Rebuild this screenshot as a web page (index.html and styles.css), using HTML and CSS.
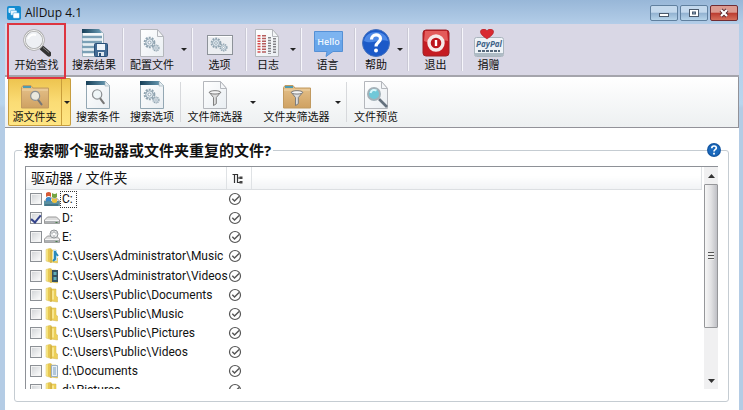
FILE: index.html
```html
<!DOCTYPE html>
<html lang="zh-CN">
<head>
<meta charset="utf-8">
<title>AllDup 4.1</title>
<link rel="stylesheet" href="styles.css">
</head>
<body>
<svg class="defs" aria-hidden="true">
  <defs>
    <linearGradient id="gold" x1="0" x2="1" y1="0" y2="0"><stop offset="0" stop-color="#fbf0a4"/><stop offset=".45" stop-color="#f3dc66"/><stop offset=".55" stop-color="#dcb43a"/><stop offset="1" stop-color="#f8e993"/></linearGradient>
    <linearGradient id="paper" x1="0" x2="1" y1="0" y2="1"><stop offset="0" stop-color="#fff"/><stop offset="1" stop-color="#e9eef2"/></linearGradient>
    <linearGradient id="teal" x1="0" x2="1" y1="0" y2="0"><stop offset="0" stop-color="#173f58"/><stop offset="1" stop-color="#6d9fb8"/></linearGradient>
    <linearGradient id="tan" x1="0" x2="0" y1="0" y2="1"><stop offset="0" stop-color="#e5c28b"/><stop offset="1" stop-color="#cfa162"/></linearGradient>
    <symbol id="gear" viewBox="0 0 16 16"><circle cx="8" cy="8" r="6" fill="none" stroke="#8fa3b0" stroke-width="2.4" stroke-dasharray="2.4 1.4"/><circle cx="8" cy="8" r="4.6" fill="#dfe8ee" stroke="#8499a8"/><circle cx="8" cy="8" r="1.8" fill="#fff" stroke="#8499a8"/></symbol>
    <symbol id="page" viewBox="0 0 24 28"><path d="M.5.5h17l6 7v20H.5z" fill="url(#paper)" stroke="#b4b7bc"/><path d="M17.5.5v7h6z" fill="#f4f6f8" stroke="#b4b7bc"/></symbol>
    <symbol id="form" viewBox="0 0 24 28"><path d="M.5.5h19l4 5v22H.5z" fill="url(#paper)" stroke="#93a7b3"/><path d="M0 0h19l3 4H0z" fill="url(#teal)"/><path d="M19 0v5h5z" fill="#e6eef2" stroke="#93a7b3" stroke-width=".6"/></symbol>
    <symbol id="funnel" viewBox="0 0 14 18"><path d="M1 2.5 5.4 8v8.5l3-2V8L13 2.5z" fill="#ddd" stroke="#777"/><ellipse cx="7" cy="2.5" rx="6" ry="1.8" fill="#f5f5f5" stroke="#777"/></symbol>
    <symbol id="folder" viewBox="0 0 28 24"><path d="M.5 2.5 2 .5h8l2 2.500h15.500v20H.5z" fill="url(#tan)" stroke="#c19a60"/><path d="M2 2h8" stroke="#4f9bb0" stroke-width="2"/><path d="M1 5h26" stroke="#f0d5a8"/></symbol>
    <symbol id="glass" viewBox="0 0 16 20"><path d="m10 11 4.500 6" stroke="#777" stroke-width="2.400" stroke-linecap="round"/><circle cx="7" cy="7" r="5.300" fill="#eef5f8" fill-opacity=".8" stroke="#8b8f92" stroke-width="1.400"/></symbol>
    <symbol id="ok" viewBox="0 0 14 14"><circle cx="7" cy="7" r="5.500" fill="#fff" stroke="#555" stroke-width="1.200"/><path d="m4.300 6.800 2.200 2.300 4.600-4.600" fill="none" stroke="#555" stroke-width="1.400"/></symbol>
    <symbol id="dir" viewBox="0 0 16 16"><path d="M2 1.500 7 0v14.500L2 13z" fill="url(#gold)" stroke="#dcc45c" stroke-width=".5"/><path d="M7 2h5v7l1.500 1v5L7 14z" fill="#edcf58" stroke="#d4b546" stroke-width=".5"/><path d="M7 1v14" stroke="#c79f2f"/><path d="M9 3.500v9" stroke="#fbeea0" stroke-width="1.500"/></symbol>
    <symbol id="disk" viewBox="0 0 16 16"><path d="m3.500 7h9l3 3v3.500h-15V10z" fill="#ddd" stroke="#999"/><path d="M1 10.500h14v3H1z" fill="#aeb1b3"/><path d="M1 10.500h14" stroke="#f6f6f6"/><path d="M11.500 12.500h2" stroke="#477d4a"/></symbol>
  </defs>
</svg>
<div class="window">
  <header class="titlebar">
    <svg class="logo" viewBox="0 0 14 14"><rect width="14" height="14" rx="2" fill="#148cd0"/><rect x="1.500" y="2" width="6.500" height="5" rx="1" fill="#d6efff"/><rect x="3.500" y="4.300" width="6.500" height="5" rx="1" fill="#e3f5ff" stroke="#148cd0" stroke-width=".5"/><rect x="6" y="6.800" width="6.500" height="5.500" rx="1" fill="#fff" stroke="#148cd0" stroke-width=".5"/></svg>
    <h1>AllDup 4.1</h1>
    <div class="controls">
      <button aria-label="最小化"><svg viewBox="0 0 12 10"><rect x="1.500" y="5.500" width="9" height="3" fill="#fff" stroke="#4b5a6c"/></svg></button>
      <button aria-label="最大化"><svg viewBox="0 0 12 10"><rect x="1.500" y="1.500" width="9" height="7" fill="#fff" stroke="#4b5a6c"/><rect x="4.500" y="4" width="3" height="2" fill="#8fabc8" stroke="#4b5a6c"/></svg></button>
      <button class="close" aria-label="关闭"><svg viewBox="0 0 12 10"><path d="m3 2 6 6m0-6L3 8" stroke="#5a2a30" stroke-width="4"/><path d="m3 2 6 6m0-6L3 8" stroke="#fff" stroke-width="2.200"/></svg></button>
    </div>
  </header>
  <nav class="toolbar main" aria-label="主工具栏">
    <button class="tool marked"><svg viewBox="0 0 28 28"><path d="m19 19 7 6" stroke="#333" stroke-width="5" stroke-linecap="round"/><path d="m20 18.500 6 5" stroke="#888"/><circle cx="11" cy="11" r="9.500" fill="#eef0f4" stroke="#aaa" stroke-width="2.500"/><circle cx="11" cy="11" r="9.500" fill="none" stroke="#f4f4f4"/><path d="M5 10c1-4 5-5 8-4" fill="none" stroke="#fff" stroke-width="2"/></svg><span>开始查找</span></button>
    <button class="tool results"><svg viewBox="0 0 28 28"><path d="M2.500.5h17l4 4v23h-21z" fill="#f5f8fa" stroke="#a1b3be"/><path d="M2 0h17l3 4H2z" fill="url(#teal)"/><path d="M2 8h20M2 13h20M2 18h20M2 23h20" stroke="#7ba0b6" stroke-width="2.400"/><path d="M2 10h20M2 15h20M2 20h20" stroke="#d7e4eb"/><rect x="14.500" y="14.500" width="13" height="13" rx="1" fill="#436b94" stroke="#294f78"/><rect x="17" y="15" width="8" height="6" fill="#eef4fa"/><rect x="18" y="23" width="6" height="4" fill="#dfe8ef"/><rect x="19" y="24" width="2" height="3" fill="#294f78"/></svg><span>搜索结果</span></button>
    <i class="sep"></i>
    <button class="tool config"><svg viewBox="0 0 28 28"><use href="#page" x="2" width="24" height="28"/><use href="#gear" x="5" y="7" width="13" height="13"/><use href="#gear" x="14" y="15" width="8" height="8"/></svg><span>配置文件</span></button><button class="more" aria-label="配置文件菜单"></button>
    <i class="sep"></i>
    <button class="tool std"><svg viewBox="0 0 28 28"><rect x="1.500" y="6.500" width="25" height="19" fill="#eceef1" stroke="#8d9299"/><path d="M2 7.500h24" stroke="#fff"/><use href="#gear" x="4" y="8" width="12" height="12"/><use href="#gear" x="13" y="14" width="9" height="9"/></svg><span>选项</span></button>
    <i class="sep"></i>
    <button class="tool log"><svg viewBox="0 0 28 28"><use href="#page" x="1" width="24" height="28"/><path d="M5 6v19" stroke="#d84b4b" stroke-width="3" stroke-dasharray="1.500 1.200"/><path d="M10 6v19" stroke="#b55d5d" stroke-width="4" stroke-dasharray="1.500 1.200"/><path d="M15.500 8v17M20.500 9v16" stroke="#838388" stroke-width="3" stroke-dasharray="1.500 1.200"/></svg><span>日志</span></button><button class="more" aria-label="日志菜单"></button>
    <i class="sep"></i>
    <button class="tool lang"><svg viewBox="0 0 30 28"><path d="M1.500 2.500h28v20H20l-7 5 1-5H1.500z" fill="#68a5ea" stroke="#5590d5"/><path d="M2 3h27v8H2z" fill="#7db4f0"/><text x="15.500" y="16" text-anchor="middle" class="hello">Hello</text></svg><span>语言</span></button>
    <i class="sep"></i>
    <button class="tool help"><svg viewBox="0 0 28 28"><circle cx="14" cy="14" r="13.500" fill="#1c5ac8" stroke="#4672bd"/><path d="M2 12C4 0 24 0 26 12 18 9 10 16 2 12" fill="#4c88e6"/><path d="M9.500 10.500c0-6 9-6 9-1 0 4-4.500 3.500-4.500 8" fill="none" stroke="#fff" stroke-width="3.200"/><circle cx="14" cy="21.500" r="2" fill="#fff"/></svg><span>帮助</span></button><button class="more" aria-label="帮助菜单"></button>
    <i class="sep"></i>
    <button class="tool std"><svg viewBox="0 0 28 28"><rect x="1" y="1" width="26" height="26" rx="3" fill="#c51c23" stroke="#9e2329"/><path d="M3 2h22l1 10C18 9 10 16 2 12z" fill="#e35b5b"/><circle cx="14" cy="14" r="7" fill="#bd151c" stroke="#f6e9e9" stroke-width="3.400"/><path d="M14 11v6" stroke="#fff" stroke-width="2.400"/></svg><span>退出</span></button>
    <i class="sep"></i>
    <button class="tool donate"><svg viewBox="0 0 30 28"><rect x=".5" y="8.500" width="29" height="19" rx="2" fill="#eef3f7" stroke="#aab5be"/><path d="M1 24h28v3H1z" fill="#aebbc5"/><text x="15" y="18" text-anchor="middle" class="paypal">PayPal</text><path d="M4 22h22" stroke="#55677a" stroke-width="2" stroke-dasharray="3 1"/><path d="M13 10C9 7 6 5 6.500 2 8-1 12-.5 13 2c1-2.500 5-3 6.500 0C20 5 17 7 13 10z" fill="#d92a31" stroke="#a9262b" stroke-width=".6"/></svg><span>捐赠</span></button>
  </nav>
  <nav class="toolbar sub" aria-label="搜索工具栏">
    <div class="active">
      <button class="tool source"><svg viewBox="0 0 28 28"><use href="#folder" y="4" width="28" height="24"/><use href="#glass" x="8" y="9" width="14" height="17"/></svg><span>源文件夹</span></button><button class="more" aria-label="源文件夹菜单"></button>
    </div>
    <button class="tool config"><svg viewBox="0 0 28 28"><use href="#form" x="2" width="24" height="28"/><use href="#glass" x="7" y="7" width="14" height="18"/></svg><span>搜索条件</span></button>
    <button class="tool config"><svg viewBox="0 0 28 28"><use href="#form" x="2" width="24" height="28"/><use href="#gear" x="5" y="7" width="13" height="13"/><use href="#gear" x="14" y="15" width="8" height="8"/></svg><span>搜索选项</span></button>
    <i class="sep"></i>
    <button class="tool filter"><svg viewBox="0 0 28 28"><use href="#page" x="2" width="24" height="28"/><use href="#funnel" x="7" y="9" width="14" height="17"/></svg><span>文件筛选器</span></button><button class="more" aria-label="文件筛选器菜单"></button>
    <button class="tool dirfilter"><svg viewBox="0 0 28 28"><use href="#folder" y="4" width="28" height="24"/><use href="#funnel" x="7" y="9" width="14" height="17"/></svg><span>文件夹筛选器</span></button><button class="more" aria-label="文件夹筛选器菜单"></button>
    <i class="sep"></i>
    <button class="tool preview"><svg viewBox="0 0 28 28"><use href="#page" x="2" width="24" height="28"/><path d="m17 18 8 8" stroke="#64717d" stroke-width="2.600"/><circle cx="12" cy="13" r="6" fill="#70c8d8" stroke="#a3b1b8" stroke-width="2"/><path d="M8.500 12c1-3.500 4-3.500 6-2.500" fill="none" stroke="#d8f7fb" stroke-width="2"/></svg><span>文件预览</span></button>
  </nav>
  <main>
    <section class="group">
      <div class="caption"><h2>搜索哪个驱动器或文件夹重复的文件?</h2><button class="info" aria-label="说明"><svg viewBox="0 0 14 14"><circle cx="7" cy="7" r="7" fill="#12549f"/><circle cx="7" cy="7" r="5.800" fill="#1a69bd"/><path d="M4.800 5.200c0-2.900 4.500-2.900 4.500-.3C9.300 6.800 7 6.500 7 8.500" fill="none" stroke="#fff" stroke-width="1.700"/><path d="M7 9.800v1.800" stroke="#fff" stroke-width="1.800"/></svg></button></div>
      <div class="list">
        <div class="view">
          <table>
            <thead><tr><th class="name">驱动器 / 文件夹</th><th class="state"><svg viewBox="0 0 14 14"><path d="M3.500 12V3.500M1.500 3.500H6.500V11.500H9M6.500 7H9" fill="none" stroke="#333" stroke-width="1.200"/><rect x="8.500" y="5.500" width="3" height="2.500" fill="#444"/><rect x="8.500" y="10" width="3" height="2.500" fill="#444"/></svg></th><th></th></tr></thead>
            <tbody>
              <tr><td><label><input type="checkbox"><svg viewBox="0 0 16 16"><use href="#disk" width="16" height="16"/><path d="M0 10h15l1 5H0z" fill="#5b90a0"/><path d="M1 14h13" stroke="#315c6e"/><path d="M2 2q3-2 5 0v4q-2-2-5 0z" fill="#d65a35"/><path d="M8 2q3 2 5 0v4q-2 2-5 0z" fill="#75a542"/><path d="M2 7q3-2 5 0v4q-2-2-5 0z" fill="#3c87c4"/><path d="M8 7q3 2 5 0v4q-2 2-5 0z" fill="#edc140"/></svg><span class="focus">C:</span></label></td><td><svg><use href="#ok"/></svg></td><td></td></tr>
              <tr><td><label><input type="checkbox" checked><svg><use href="#disk"/></svg><span>D:</span></label></td><td><svg><use href="#ok"/></svg></td><td></td></tr>
              <tr><td><label><input type="checkbox"><svg viewBox="0 0 16 16"><use href="#disk" width="16" height="16"/><circle cx="10" cy="5" r="4" fill="#e7e9ea" stroke="#919598"/><path d="M10 1v8M6.500 4h7" stroke="#a8abad"/><circle cx="10" cy="5" r="1.200" fill="#fff"/></svg><span>E:</span></label></td><td><svg><use href="#ok"/></svg></td><td></td></tr>
              <tr><td><label><input type="checkbox"><svg viewBox="0 0 16 16"><use href="#dir" width="16" height="16"/><path d="M9 2h4v11H9z" fill="#bcdfee"/><path d="M11 3v8l-2 2M11 4l3 4" fill="none" stroke="#2989b9" stroke-width="2"/></svg><span>C:\Users\Administrator\Music</span></label></td><td><svg><use href="#ok"/></svg></td><td></td></tr>
              <tr><td><label><input type="checkbox"><svg viewBox="0 0 16 16"><use href="#dir" width="16" height="16"/><path d="M8 2h6v12H8z" fill="#36525f"/><path d="M9.500 4h3v3h-3zm0 5h3v3h-3z" fill="#5faeb8"/></svg><span>C:\Users\Administrator\Videos</span></label></td><td><svg><use href="#ok"/></svg></td><td></td></tr>
              <tr><td><label><input type="checkbox"><svg><use href="#dir"/></svg><span>C:\Users\Public\Documents</span></label></td><td><svg><use href="#ok"/></svg></td><td></td></tr>
              <tr><td><label><input type="checkbox"><svg><use href="#dir"/></svg><span>C:\Users\Public\Music</span></label></td><td><svg><use href="#ok"/></svg></td><td></td></tr>
              <tr><td><label><input type="checkbox"><svg><use href="#dir"/></svg><span>C:\Users\Public\Pictures</span></label></td><td><svg><use href="#ok"/></svg></td><td></td></tr>
              <tr><td><label><input type="checkbox"><svg><use href="#dir"/></svg><span>C:\Users\Public\Videos</span></label></td><td><svg><use href="#ok"/></svg></td><td></td></tr>
              <tr><td><label><input type="checkbox"><svg viewBox="0 0 16 16"><use href="#dir" width="16" height="16"/><path d="M7.500 2.500h6v11h-6z" fill="#eaf1f7" stroke="#9bb0c4"/><path d="M9 5h3M9 7h3M9 9h3M9 11h3" stroke="#7b9dbd"/></svg><span>d:\Documents</span></label></td><td><svg><use href="#ok"/></svg></td><td></td></tr>
              <tr><td><label><input type="checkbox"><svg><use href="#dir"/></svg><span>d:\Pictures</span></label></td><td><svg><use href="#ok"/></svg></td><td></td></tr>
            </tbody>
          </table>
        </div>
        <div class="scroll"><button aria-label="向上滚动"><svg viewBox="0 0 7 4"><path d="m0 4 3.500-4L7 4z" fill="#333"/></svg></button><div class="thumb"><i></i></div><button aria-label="向下滚动"><svg viewBox="0 0 7 4"><path d="m0 0 3.500 4L7 0z" fill="#333"/></svg></button></div>
      </div>
    </section>
  </main>
</div>
</body>
</html>
```
FILE: styles.css
```css
* { box-sizing: border-box; }

body {
  margin: 0;
  height: 100vh;
  overflow: hidden;
  font: 12px/16px "Open Sans", "Noto Sans CJK SC", sans-serif;
  color: #111;
}

button { margin: 0; padding: 0; border: 0; background: none; font: inherit; color: inherit; }
svg { display: block; flex: none; }
.defs { position: absolute; width: 0; height: 0; }

.window {
  display: flex;
  flex-direction: column;
  height: 100%;
  padding: 0 4px 0 5px;
  background: linear-gradient(#98b7d8, #b3cde8 24px, #b9d5ee 104px, #b4cce5 108px);
}

.titlebar { display: flex; align-items: center; gap: 4px; height: 24px; padding: 2px 1px 0 2px; }
.logo { width: 14px; height: 14px; }
h1 { flex: 1; margin: 0; font-size: 12px; font-weight: 400; }
.controls { display: flex; gap: 2px; }
.controls button {
  display: grid;
  place-items: center;
  width: 28px;
  height: 16px;
  border: 1px solid #60809f;
  border-radius: 2px;
  background: linear-gradient(#c4d9ed 45%, #91b1d0 50%, #b7d4ea);
}
.controls svg { width: 12px; height: 10px; }
.controls .close { border-color: #702c33; background: linear-gradient(#dc9b91 45%, #bb3b2f 50%, #d56f5b); }

.toolbar { display: flex; flex: none; border-bottom: 1px solid #929299; }
.main { height: 53px; padding: 0 2px; background: #d9d7e5; border-bottom-width: 2px; border-color: #a5a5ac; }
.sub { height: 51px; padding: 1px 3px; border-right: 1px solid #929299; background: linear-gradient(#fff, #edf0f1); }

.tool { display: flex; flex-direction: column; align-items: center; flex: none; font-size: 11px; line-height: 16px; white-space: nowrap; }
.main .tool { padding-top: 5px; }
.sub .tool { padding-top: 3px; }
.tool svg { height: 28px; width: 28px; }
.marked { position: relative; width: 59px; }
.marked::after { content: ""; position: absolute; inset: -1px 0 -4px; border: 2px solid #dd3540; z-index: 1; }
.results { width: 56px; }
.config { width: 54px; }
.std { width: 51px; }
.log { width: 40px; }
.lang { width: 49px; margin-right: 2px; }
.help { width: 38px; }
.donate { width: 49px; }
.source { width: 53px; }
.filter { width: 66px; }
.dirfilter { width: 73px; }
.preview { width: 56px; }
.tool.lang svg, .tool.donate svg { width: 30px; }
.hello { font: 600 9px "Open Sans", sans-serif; fill: #f0f8ff; }
.paypal { font: italic 700 8px "Open Sans", sans-serif; fill: #3f6387; }

.sep { flex: none; width: 1px; margin: 4px 1px; background: #f6f6fb; box-shadow: -1px 0 #cac9d5; }
.sub .sep { background: #d7d9dc; box-shadow: none; }
.more { display: flex; align-items: center; flex: none; width: 12px; padding-left: 2px; }
.more::before { content: ""; border: solid transparent; border-width: 3px 3px 0; border-top-color: #222; }

.active { display: flex; flex: none; border-radius: 2px; background: linear-gradient(#edc34e, #fbdc75 50%, #ffe684); box-shadow: inset 0 0 0 1px #c79d3f; }
.active .more { width: 10px; border-left: 1px solid #c99e3b; }

main { flex: 1; display: flex; min-height: 0; padding: 22px 10px 8px 9px; background: #fff; }
.group { flex: 1; display: flex; flex-direction: column; min-width: 0; border: 1px solid #c5ccd2; border-radius: 3px; padding: 0 10px 12px; }
.caption { display: flex; justify-content: space-between; align-items: center; flex: none; height: 22px; margin: -12px -3px 5px; }
h2 { margin: 0; padding: 0 2px; background: #fff; font-size: 15px; line-height: 22px; font-weight: 700; }
.info { background: #fff; }
.info svg { width: 14px; height: 14px; }

.list { flex: 1; display: flex; min-height: 0; border: solid #8e9197; border-width: 1px 0 0 1px; }
.view { flex: 1; min-width: 0; padding-right: 2px; overflow: hidden; }
table { width: 100%; height: 233px; table-layout: fixed; border-collapse: collapse; }
th { height: 22px; padding: 0; border-right: 1px solid #dfe2e5; border-bottom: 1px solid #dcdfe2; background: linear-gradient(#fff 40%, #f1f3f5); text-align: left; font-size: 14px; line-height: 20px; font-weight: 400; }
.name { width: 200px; padding-left: 5px; }
.state { width: 25px; }
td { padding: 0; }
td + td, .state { padding-left: 2px; }
th svg, td svg { width: 14px; height: 14px; }
th svg { margin-left: 2px; }
label { display: flex; align-items: center; height: 18px; padding-left: 4px; white-space: nowrap; font-family: Roboto, "Open Sans", sans-serif; }
label svg { width: 16px; height: 16px; margin: 0 2px; }
label span { padding-top: 1px; line-height: 17px; }
.focus { margin-left: -2px; padding: 0 4px 0 2px; outline: 1px dotted #333; outline-offset: -1px; }
input { appearance: none; flex: none; width: 12px; height: 12px; margin: 0; border: 1px solid #8c9095; background: linear-gradient(135deg, #cfd2d5, #fff); box-shadow: inset 0 0 0 1px #f3f3f3; }
input:checked { display: grid; place-items: center; }
input:checked::before { content: ""; width: 4px; height: 8px; border: solid #33428b; border-width: 0 2px 2px 0; transform: rotate(40deg); }

.scroll { display: flex; flex-direction: column; width: 14px; background: #f0f0f1; }
.scroll button { display: grid; place-items: center; flex: none; height: 17px; }
.scroll svg { width: 7px; height: 4px; }
.thumb { display: grid; place-items: center; flex: 0 1 144px; margin-bottom: auto; border: 1px solid #96979a; border-radius: 1px; background: linear-gradient(90deg, #f6f6f6, #e2e2e4 50%, #bfc0c5); }
.thumb i { width: 6px; height: 8px; background: repeating-linear-gradient(#555 0 1px, #eee 1px 3px); }
```
